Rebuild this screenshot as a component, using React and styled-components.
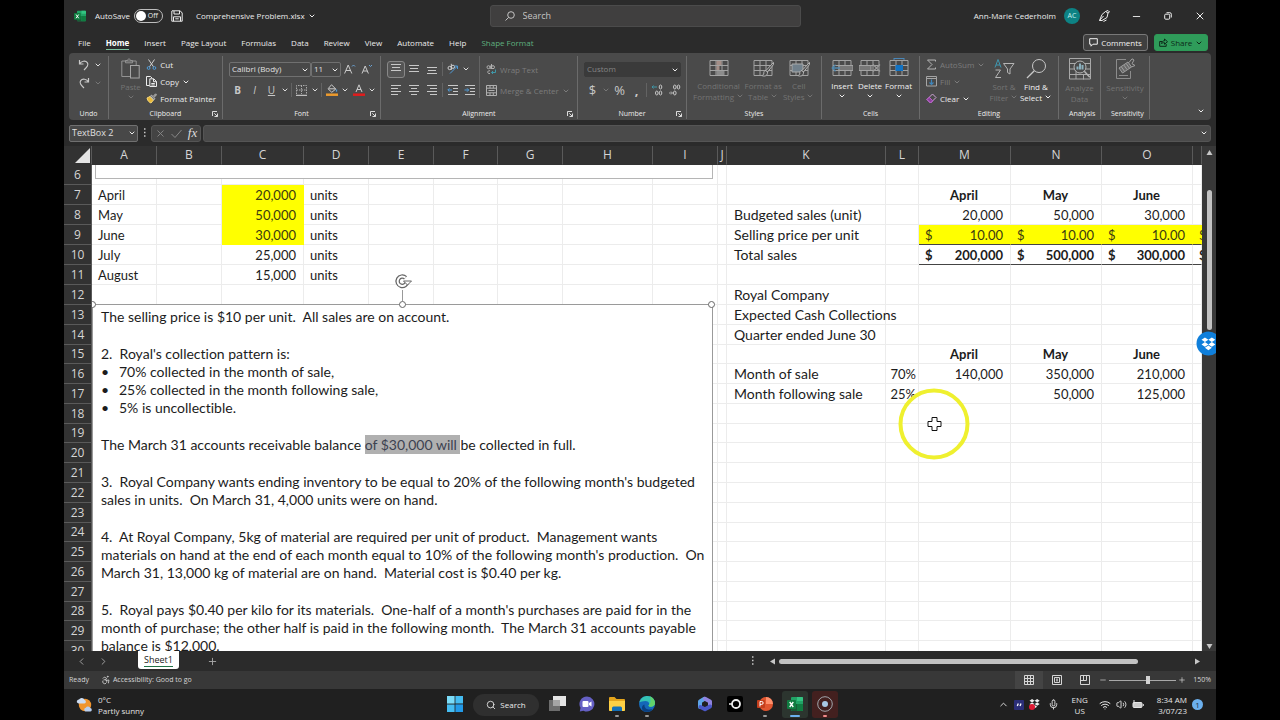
import React from "react";
import styled, { createGlobalStyle, css } from "styled-components";
import {
  Accessibility,
  ChevronDown,
  ChevronLeft,
  ChevronRight,
  ChevronUp,
  Mic,
  Minus,
  Plus,
  Search,
  Volume2,
  Wifi,
  X,
} from "lucide-react";

const GlobalStyle = createGlobalStyle`
  * {
    box-sizing: border-box;
  }

  body {
    margin: 0;
    background: #000;
  }

  button, input, select {
    margin: 0;
    padding: 0;
    border: 0;
    background: none;
    color: inherit;
    font: inherit;
    outline: none;
  }

  svg {
    display: block;
    flex: none;
  }
`;

const Screen = styled.div`
  min-height: 100vh;
  padding: 0 5%;
  background: #000;
`;

const Desktop = styled.div`
  position: relative;
  display: flex;
  flex-direction: column;
  height: 100vh;
  overflow: hidden;
  background: #2b2b2b;
  color: #ececec;
  font-family: "Open Sans", "Noto Sans", sans-serif;
  font-size: 8px;
  line-height: 12px;
  white-space: nowrap;
`;

/* Title bar */

const TitleBar = styled.header`
  display: grid;
  grid-template-columns: 1fr 311px 1fr;
  gap: 0 20px;
  align-items: center;
  height: 32px;
  flex: none;
  padding: 0 0 0 10px;
`;

const TitleSide = styled.div`
  display: flex;
  align-items: center;
  justify-content: ${props => props.end ? "flex-end" : "flex-start"};
`;

const FileName = styled.button`
  display: flex;
  align-items: center;
  gap: 3px;
  margin-left: 13px;
`;

const AutoSave = styled.label`
  display: flex;
  align-items: center;
  gap: 4px;
  margin: 0 8px 0 9px;
`;

const Toggle = styled.span`
  position: relative;
  display: flex;
  align-items: center;
  justify-content: flex-end;
  width: 29px;
  height: 14px;
  padding-right: 4px;
  border: 1px solid #bdbdbd;
  border-radius: 7px;
  font-size: 7px;

  input {
    position: absolute;
    left: 1px;
    top: 1px;
    width: 10px;
    height: 10px;
    appearance: none;
    border-radius: 50%;
    background: #fff;
  }
`;

const SearchBox = styled.label`
  display: flex;
  align-items: center;
  gap: 8px;
  height: 22px;
  padding: 0 14px;
  border: 1px solid #4b4b4b;
  border-radius: 3px;
  background: #403f3f;
  color: #c4c4c4;

  input {
    flex: 1;
    min-width: 0;
    font-size: 9px;
  }

  input::placeholder {
    color: #c4c4c4;
  }
`;

const Avatar = styled.span`
  display: flex;
  align-items: center;
  justify-content: center;
  width: 16px;
  height: 16px;
  margin: 0 8px;
  border-radius: 50%;
  background: #0d8284;
  color: #c9f1ee;
  font-size: 7px;
`;

const WindowButton = styled.button`
  display: flex;
  align-items: center;
  justify-content: center;
  width: 32px;
  height: 24px;
  color: #eee;
`;

/* Tabs */

const TabBar = styled.nav`
  display: flex;
  align-items: center;
  gap: 15px;
  height: 21px;
  flex: none;
  padding: 0 8px 0 14px;
`;

const Tab = styled.a`
  height: 13px;
  margin-top: 2px;
  color: ${props => props.accent ? "#5fb07f" : "#ececec"};
  text-decoration: none;

  ${props => props.active && css`
    color: #fff;
    font-weight: 700;
    border-bottom: 1px solid #7cc5a0;
  `}
`;

const TabActions = styled.div`
  display: flex;
  gap: 6px;
  margin-left: auto;
`;

const ActionButton = styled.button`
  display: flex;
  align-items: center;
  justify-content: center;
  gap: 3px;
  width: ${props => props.green ? 54 : 65}px;
  height: 17px;
  border: 1px solid ${props => props.green ? "#2e9a58" : "#787878"};
  border-radius: 3px;
  background: ${props => props.green ? "#2f9c5a" : "#3f3f3f"};
  color: ${props => props.green ? "#0c2a18" : "#f2f2f2"};
`;

/* Ribbon */

const Ribbon = styled.section`
  display: flex;
  height: 67px;
  flex: none;
  margin: 0 5px;
  padding: 3px 0 1px;
  border-radius: 4px;
  background: #4a4a4a;
`;

const GroupBox = styled.div`
  display: flex;
  flex-direction: column;
  justify-content: space-between;
  flex: none;
  width: ${props => props.width}px;
  border-right: 1px solid #6b6b6b;
`;

const GroupBody = styled.div`
  display: flex;
  justify-content: ${props => props.center ? "center" : "flex-start"};
  height: 52px;
  padding: 0 6px;
`;

const GroupFooter = styled.div`
  display: grid;
  grid-template-columns: 10px 1fr 10px;
  align-items: center;
  height: 11px;
  text-align: center;
  font-size: 7px;
  line-height: 11px;
`;

const ToolColumn = styled.div`
  display: flex;
  flex-direction: column;
  gap: ${props => props.gap || 0}px;
  flex: ${props => props.grow ? 1 : "none"};
  padding-top: ${props => props.top || 0}px;
  padding-left: ${props => props.indent || 0}px;
`;

const ToolRow = styled.div`
  display: flex;
  align-items: center;
  height: 18px;
`;

const Tool = styled.button`
  display: flex;
  align-items: center;
  justify-content: center;
  width: ${props => props.wide ? 18 : 17}px;
  height: 17px;
  border-radius: 3px;
  color: #c8c8c8;
  font-size: ${props => props.large ? 13 : 10}px;
  font-weight: ${props => props.bold ? 700 : 400};

  ${props => props.pressed && css`
    border: 1px solid #888;
    background: #555;
  `}
`;

const Arrow = styled.button`
  display: flex;
  align-items: center;
  justify-content: center;
  width: 10px;
  height: 16px;
  color: ${props => props.dim ? "#777" : "#ddd"};
`;

const Divider = styled.span`
  width: 1px;
  height: ${props => props.tall ? 42 : 14}px;
  margin: 0 1px;
  background: #636363;
`;

const LineTool = styled.button`
  display: flex;
  align-items: center;
  gap: 3px;
  height: 17px;
  color: ${props => props.dim ? "#7c7c7c" : "#ececec"};
`;

const BigTool = styled.button`
  display: flex;
  flex-direction: column;
  align-items: center;
  width: ${props => props.width}px;
  padding-top: 2px;
  color: ${props => props.dim ? "#747474" : "#f0f0f0"};
  line-height: 11px;

  span {
    display: flex;
    align-items: center;
    gap: 2px;
    min-height: 11px;
  }

  svg:first-child {
    margin-bottom: 2px;
  }
`;

const SelectBox = styled.span`
  position: relative;
  display: flex;
  width: ${props => props.width}px;
  height: ${props => props.tall ? 17 : 15}px;

  select {
    width: 100%;
    padding: 0 2px;
    appearance: none;
    border: 1px solid ${props => props.dim ? "#3a3a3a" : "#707070"};
    border-radius: 2px;
    background: ${props => props.dim ? "#3a3a3a" : "#484848"};
    color: ${props => props.dim ? "#858585" : "#e0e0e0"};
    font-size: ${props => props.tall ? 9 : 8}px;
  }

  svg {
    position: absolute;
    right: 2px;
    top: 4px;
    pointer-events: none;
  }
`;

const CollapseButton = styled.button`
  align-self: flex-end;
  margin-left: auto;
  padding: 4px 6px;
`;

/* Formula bar */

const FormulaBar = styled.div`
  display: flex;
  align-items: center;
  height: 26px;
  flex: none;
  padding: 0 5px;
`;

const FormulaButtons = styled.div`
  display: flex;
  align-items: center;
  justify-content: space-around;
  width: 50px;
  height: 17px;
  margin-right: 2px;
  border: 1px solid #555;
  border-radius: 3px;
  background: #444;
  color: #888;
`;

const FormulaInput = styled.label`
  display: flex;
  align-items: center;
  flex: 1;
  height: 17px;
  padding: 0 2px;
  border: 1px solid #555;
  border-radius: 3px;
  background: #4a4a4a;

  input {
    flex: 1;
  }
`;

const FunctionButton = styled.button`
  color: #ddd;
  font-family: "Liberation Serif", serif;
  font-size: 13px;
  font-style: italic;
`;

/* Sheet */

const SheetArea = styled.main`
  display: flex;
  flex: 1;
  min-height: 0;
`;

const Grid = styled.div`
  position: relative;
  flex: 1;
  min-width: 0;
  overflow: hidden;
  background: #fff;
`;

const SheetTable = styled.table`
  width: 100%;
  table-layout: fixed;
  border-collapse: separate;
  border-spacing: 0;
  color: #1c1c1c;
  font-family: Lato, sans-serif;
  font-size: 13px;
  font-variant-ligatures: none;
  line-height: 18px;
`;

const HeadCell = styled.th`
  height: ${props => props.short ? 19 : 20}px;
  padding: 0;
  overflow: hidden;
  border-right: 1px solid #5a5a5a;
  border-bottom: 1px solid ${props => props.column ? "#323232" : "#5a5a5a"};
  background: #323232;
  color: #d6d6d6;
  font-family: "Open Sans", "Noto Sans", sans-serif;
  font-size: 12px;
  font-weight: 400;
  line-height: 18px;
  text-align: center;
`;

const Cell = styled.td`
  padding: 0 ${props => props.tight ? 2 : 7}px 0 ${props => props.tight ? 0 : 6}px;
  border-right: 1px solid #ececec;
  border-bottom: 1px solid #ececec;
  text-align: ${props => props.align || "left"};
  font-weight: ${props => props.bold ? 700 : 400};

  ${props => props.label && css`
    padding-left: 7px;
    font-size: 14px;
  `}

  ${props => props.filled && css`
    border-color: #ff0;
    background: #ff0;
    color: #3a3a10;
  `}

  ${props => props.ruled && css`
    border-bottom-color: #444;
  `}
`;

const Money = styled.div`
  display: flex;
  justify-content: space-between;
`;

const Layer = styled.div`
  position: absolute;
  inset: 19px 0 0 28px;
  overflow: hidden;
  pointer-events: none;
`;

const UpperBox = styled.div`
  position: absolute;
  left: 3px;
  top: 0;
  width: 618px;
  height: 14px;
  border: 1px solid #b5b5b5;
  border-top: 0;
  background: #fff;
`;

const TextBox = styled.div`
  position: absolute;
  left: 0;
  top: 139px;
  width: 621px;
  padding: 3px 8px;
  border: 1px solid #9a9a9a;
  background: #fff;
  color: #1c1c1c;
  font-family: Lato, sans-serif;
  font-size: 14px;
  font-variant-ligatures: none;
  line-height: 18px;
  pointer-events: auto;

  p, ul {
    margin: 0 0 19px;
    padding: 0;
    white-space: pre;
  }

  p.lead {
    margin: 0;
  }

  li {
    display: flex;
    list-style: none;
  }

  li::before {
    content: "•";
    width: 18px;
  }

  mark {
    padding: 1px 0;
    background: #b0b0b0;
    color: #3c4250;
  }
`;

const Handle = styled.span`
  position: absolute;
  left: ${props => props.at};
  top: -4px;
  width: 7px;
  height: 7px;
  margin-left: -4px;
  border: 1px solid #666;
  border-radius: 50%;
  background: #fff;
`;

const Rotate = styled.span`
  position: absolute;
  left: 50%;
  top: -32px;
  margin-left: -9px;
`;

const Pointer = styled.span`
  position: absolute;
  left: 806px;
  top: 223px;
`;

const DropboxBadge = styled.span`
  position: absolute;
  right: -5px;
  top: 331px;
`;

const VerticalBar = styled.div`
  display: flex;
  flex-direction: column;
  align-items: center;
  width: 14px;
  flex: none;
  padding: 3px 0 1px;
  background: #383838;
`;

const Thumb = styled.span`
  border-radius: 3px;
  background: #c2c2c2;

  ${props => props.vertical ? css`
    width: 5px;
    height: 28%;
    margin: 34px 0 auto;
  ` : css`
    width: 83%;
    height: 5px;
    margin-right: auto;
  `}
`;

/* Sheet tabs and status bar */

const SheetTabs = styled.div`
  display: flex;
  align-items: center;
  height: 20px;
  flex: none;
  padding: 0 15px 0 12px;
  color: #a8a8a8;
`;

const SheetNav = styled.div`
  display: flex;
  gap: 11px;
`;

const SheetTab = styled.a`
  align-self: flex-start;
  height: 18px;
  margin: 0 28px 0 29px;
  padding: 3px 6px 0;
  border-radius: 0 0 3px 3px;
  background: #fff;
  color: #222;
  font-size: 9px;
  text-decoration: none;

  span {
    display: block;
    border-bottom: 1px solid #1f7246;
  }
`;

const HorizontalBar = styled.div`
  display: flex;
  align-items: center;
  gap: 3px;
  flex: 0 1 432px;
  margin-left: 10px;
`;

const Spacer = styled.span`
  flex: 1;
`;

const StatusBar = styled.footer`
  display: flex;
  align-items: center;
  height: 18px;
  flex: none;
  padding: 0 5px;
  background: #383838;
  color: #d6d6d6;
  font-size: 7px;
`;

const StatusText = styled.span`
  display: flex;
  align-items: center;
  gap: 2px;
  margin-right: 12px;
`;

const ZoomLevel = styled.span`
  margin-left: 7px;
`;

const ViewButton = styled.button`
  display: flex;
  align-items: center;
  justify-content: center;
  width: 28px;
  height: 18px;
  background: ${props => props.active ? "#444" : "none"};
`;

const ZoomSlider = styled.input`
  width: 67px;
  height: 12px;
  margin: 0 2px;
  appearance: none;
  background: linear-gradient(#a8a8a8, #a8a8a8) center / 100% 1px no-repeat;

  &::-webkit-slider-thumb {
    appearance: none;
    width: 4px;
    height: 8px;
    background: #d2d2d2;
  }
`;

/* Taskbar */

const Taskbar = styled.div`
  display: grid;
  grid-template-columns: 1fr auto 1fr;
  align-items: center;
  height: 31px;
  flex: none;
  background: #202020;
`;

const Weather = styled.div`
  display: flex;
  align-items: center;
  gap: 5px;
  padding-left: 12px;
  line-height: 11px;
  color: #e0e0e0;
`;

const Apps = styled.div`
  display: flex;
  align-items: center;
`;

const AppButton = styled.button`
  display: flex;
  flex-direction: column;
  align-items: center;
  justify-content: flex-end;
  width: 26px;
  height: 27px;
  margin: 0 2px;
  padding-bottom: 1px;
  border-radius: 3px;
  background: ${props => props.tint || "none"};

  &::after {
    content: "";
    width: ${props => props.active ? 10 : 4}px;
    height: 2px;
    margin-top: 3px;
    border-radius: 1px;
    background: ${props => props.mark || "transparent"};
  }
`;

const SearchPill = styled.button`
  display: flex;
  align-items: center;
  justify-content: center;
  gap: 4px;
  width: 66px;
  height: 22px;
  margin: 0 3px;
  border-radius: 11px;
  background: #2f2f2f;
`;

const AppGap = styled.span`
  width: 28px;
`;

const Tray = styled.div`
  display: flex;
  align-items: center;
  justify-content: flex-end;
  gap: 5px;
  padding-right: 13px;
  line-height: 11px;
  color: #e6e6e6;
`;

const Language = styled.div`
  margin: 0 6px 0 5px;
  text-align: center;
`;

const Microphone = styled.span`
  margin: 0 3px;
`;

const Clock = styled.div`
  margin-left: 8px;
  text-align: right;
`;

const Count = styled.span`
  width: 11px;
  height: 11px;
  border-radius: 50%;
  background: #6cb0ee;
  color: #17304a;
  line-height: 11px;
  text-align: center;
`;

/* Icons */

const Svg = ({ size = 16, w, h, box, children }) => (
  <svg
    width={ w || size }
    height={ h || size }
    viewBox={ box || `0 0 ${w || size} ${h || size}` }
    fill="none"
    stroke="currentColor"
  >
    {children}
  </svg>
);

const Chevron = () => <ChevronDown size={ 8 } strokeWidth={ 3 } />;

const DotsIcon = () => (
  <Svg w={ 13 } h={ 12 }>
    <path d="M6 2h1.500M6 5.500h1.500M6 9h1.500" strokeWidth="1.500" stroke="#c8c8c8" />
  </Svg>
);

const ExcelIcon = ({ size }) => (
  <Svg size={ size } box="0 0 16 16">
    <g stroke="none">
      <rect x="4" y="1" width="12" height="14" rx="1" fill="#21a366" />
      <path d="M10 1h5a1 1 0 0 1 1 1v3h-6z" fill="#33c481" />
      <path d="M4 8h6v7H5a1 1 0 0 1-1-1z" fill="#185c37" />
      <path d="M10 8h6v6a1 1 0 0 1-1 1h-5z" fill="#107c41" />
      <rect y="4" width="9" height="9" rx="1" fill="#107c41" />
    </g>
    <path d="M2.7 6l3.6 5M6.3 6l-3.6 5" stroke="#fff" strokeWidth="1.3" />
  </Svg>
);

const SaveIcon = () => (
  <Svg size={ 12 }>
    <path d="M1 .8h8.2L11.2 3v8.2H.8V1zM3 1v3h5.5V1M2.5 11.2V6.8h7v4.4M4.3 8.8h3.4" />
  </Svg>
);

const PenIcon = () => (
  <Svg size={ 12 }>
    <path d="M1.500 10.500L4 4.500l3.500-3 2.500 1.500-1 4.500-5 3zM1.500 10.500l4-4.500M7.500 1.500L10 .500 11.500 2 10 3M5.500 11.500l3-1.500" />
  </Svg>
);

const RestoreIcon = () => (
  <Svg size={ 8 }>
    <rect x=".7" y="2.2" width="5" height="5" rx="1" />
    <path d="M2.5.7h3.3a1.5 1.5 0 0 1 1.5 1.5v3.3" />
  </Svg>
);

const UndoIcon = ({ redo }) => (
  <Svg size={ 12 }>
    <path
      d={ redo ? "M10.500 1v4H6.500M10.300 4.800C8.800 2 4.500 1.200 2.700 3.600 1 6 3 8 6 11" : "M1.500 1v4h4M1.700 4.800C3.200 2 7.500 1.200 9.300 3.600 11 6 9 8 6 11" }
      strokeWidth="1.2"
    />
  </Svg>
);

const PasteIcon = () => (
  <Svg w={ 19 } h={ 21 }>
    <path d="M9 18.500H.8V3h14.400v4M4.500 4.800V2.500h2C6.500.500 9.500.500 9.500 2.500h2v2.300z" stroke="#939393" />
    <rect x="9.500" y="7.500" width="8.700" height="12.500" stroke="#a5a5a5" fill="#4a4a4a" />
  </Svg>
);

const CutIcon = () => (
  <Svg size={ 11 }>
    <path d="M2.500.500l5 7.300M8.500.500l-5 7.300" stroke="#d0d0d0" />
    <circle cx="2.600" cy="9" r="1.400" stroke="#4f9bd8" />
    <circle cx="8.400" cy="9" r="1.400" stroke="#4f9bd8" />
  </Svg>
);

const CopyIcon = () => (
  <Svg size={ 11 }>
    <path d="M3.500 9.500h-3v-9h4l1.500 1.500" />
    <path d="M3.800 2.800h4l2.700 2.700v5h-6.700zM7.500 3v2.700h3M5.300 7.500h3.500M5.300 9h3.500" />
  </Svg>
);

const PainterIcon = () => (
  <Svg size={ 11 }>
    <path d="M1 5l3-1.500 3.500 3.500L5 10C3.500 9.500 1.500 8 1 5z" fill="#e8b838" stroke="#f4d678" />
    <path d="M4.300 3.300l1.200-1.200L7 3.500 9.600.800l.900 1L8 4.500l1 1.200-1.300 1.200z" fill="#777" stroke="#ddd" strokeWidth=".7" />
  </Svg>
);

const LauncherIcon = () => (
  <Svg size={ 6 }>
    <path d="M.5 5V.5H5M2.300 2.300l3 3M5.500 2.500v3h-3" strokeWidth=".9" />
  </Svg>
);

const LinesIcon = ({ lines }) => (
  <Svg size={ 12 }>
    {lines.map(([x, y, width]) => (
      <path key={ y } d={ `M${x} ${y}h${width}` } />
    ))}
  </Svg>
);

const BorderIcon = () => (
  <Svg size={ 11 }>
    <path d="M.5 9V.5h10V9M5.500.500V9M.500 5h10" strokeDasharray="1.500 1" stroke="#aaa" />
    <path d="M0 10.300h11" stroke="#ddd" />
  </Svg>
);

const BucketIcon = () => (
  <Svg size={ 12 }>
    <path d="M5.500.800L9.800 5 5.800 8.300 2 4.800zM3 4.800h6.500" stroke="#ccc" />
    <path d="M10.500 5.500v2.200" stroke="#4f9bd8" strokeWidth="1.300" />
    <path d="M0 10.700h12" stroke="#ec9a2d" strokeWidth="2.500" />
  </Svg>
);

const FontColorIcon = () => (
  <Svg size={ 12 }>
    <path d="M3 8L6 .800 9 8M4 5.500h4" stroke="#ccc" />
    <path d="M0 10.700h12" stroke="#e01c1c" strokeWidth="2.500" />
  </Svg>
);

const FontSizeIcon = ({ down }) => (
  <Svg size={ 12 }>
    <path d={ down ? "M1 10.500L4.200 3l3.200 7.500M2.200 8h4" : "M.600 10.500L4.200 2l3.600 8.500M2 7.500h4.500" } stroke="#ccc" />
    <path d={ down ? "M8 2l1.500 1.500L11 2" : "M8 3.500L9.500 2 11 3.500" } stroke="#6ba5d8" />
  </Svg>
);

const OrientationIcon = () => (
  <Svg size={ 12 }>
    <circle cx="2.700" cy="5" r="1.700" stroke="#ccc" />
    <circle cx="6" cy="3.800" r="1.600" stroke="#ccc" />
    <path d="M4.500 3.500v3.200M4.300.800v4.500" stroke="#ccc" />
    <path d="M3 10.500L10.500 3M7.500 3h3v3" stroke="#4f9bd8" />
  </Svg>
);

const IndentIcon = ({ right }) => (
  <Svg size={ 12 }>
    <path d="M1 1.500h10M6 4.500h5M6 7.500h5M1 10.500h10" />
    <path d={ right ? "M.500 6h4M3 4.300L4.700 6 3 7.700" : "M5 6H1M2.500 4.300L.800 6l1.700 1.700" } stroke="#4f9bd8" />
  </Svg>
);

const WrapIcon = () => (
  <Svg size={ 11 }>
    <g stroke="#b0b0b0">
      <circle cx="2.500" cy="3.200" r="1.500" />
      <circle cx="7" cy="3.200" r="1.500" />
      <path d="M4.300 1.500v3.500M5.500 0v5M4 6.800C1 6 1 10.300 4 9.500" />
    </g>
    <path d="M9.500 5.500v3H5.500M7 7L5.500 8.500 7 10" stroke="#3f97a8" />
  </Svg>
);

const MergeIcon = () => (
  <Svg size={ 11 }>
    <path
      d="M.500.500h10v10H.500zM.500 3.200h10M.500 7.800h10M4 .500v2.700M7.300.500v2.700M4 7.800v2.700M7.300 7.800v2.700M2.500 5.500h6"
      stroke="#b0b0b0"
    />
  </Svg>
);

const DecimalIcon = ({ less }) => (
  <Svg size={ 12 }>
    <ellipse cx="9.500" cy="3" rx="1.300" ry="2" />
    <ellipse cx="5.800" cy="9" rx="1.300" ry="2" />
    {less ? <ellipse cx="5.800" cy="3" rx="1.300" ry="2" /> : <ellipse cx="9.500" cy="9" rx="1.300" ry="2" />}
    <path d={ less ? "M0 9h3.500M2 7.500L3.500 9 2 10.500" : "M6 3H1M2.500 1.500L1 3l1.500 1.500" } stroke={ less ? "#aaa" : "#3f97a8" } />
  </Svg>
);

const CellsIcon = ({ kind }) => (
  <Svg w={ 22 } h={ 20 }>
    <path d="M2 2.500h18v15H2zM2 7.500h18M2 12.500h18M8 2.500v15M14 2.500v15" stroke="#a2a2a2" />
    {kind === "conditional" && (
      <g stroke="none">
        <path d="M8.500 3h5v4h-5zM8.500 8h3v4h-3z" fill="#a58f88" />
        <path d="M8.500 13h8v4h-8z" fill="#8c8c8c" />
      </g>
    )}
    {kind === "insert" && (
      <>
        <path d="M8 7.500h14v5H8z" fill="#777" stroke="#a2a2a2" />
        <path d="M9 10H1M4.500 6.800L1.200 10l3.300 3.200" stroke="#5288ad" strokeWidth="1.300" />
      </>
    )}
    {kind === "delete" && (
      <>
        <path d="M0 7.500h12v5H0z" fill="#777" stroke="#a2a2a2" />
        <path d="M14 6.500l7 7M21 6.500l-7 7" stroke="#999" strokeWidth="1.300" />
      </>
    )}
    {kind === "format" && (
      <>
        <path d="M7.500 7h7.500v6H7.500z" fill="#1273c4" stroke="none" />
        <path d="M6 0v2M16 0v2M6 .500h10" stroke="#4a87b8" />
      </>
    )}
    {(kind === "table" || kind === "styles") && (
      <>
        {kind === "styles" && <path d="M4 6h11v8H4z" fill="#71808b" stroke="#aaa" />}
        <path d="M21.500 4.500l-7.500 8 1.500 1.500 6-7.500zM14 12.500c-2 0-2.500 2-2.200 3.500-.500 1-1.300 1.300-2 1.500 2.500 1.300 6 .500 5.700-3.500z" fill="#4a4a4a" stroke="#b4b4b4" />
      </>
    )}
  </Svg>
);

const SumIcon = () => (
  <Svg size={ 11 }>
    <path d="M9.500 2.500V1h-8L6 5.500 1.500 10h8V8.500" stroke="#b5b5b5" />
  </Svg>
);

const FillIcon = () => (
  <Svg size={ 11 }>
    <path d="M.5.500h10v9.500H.500z" stroke="#a5a5a5" />
    <path d="M.5 2.500h10" stroke="#a5a5a5" />
    <path d="M5.500 3.500v5M3.500 6.500l2 2 2-2" stroke="#3f86bb" strokeWidth="1.200" />
  </Svg>
);

const EraserIcon = () => (
  <Svg size={ 11 }>
    <path d="M6.500 1L10 4.500 4.500 10 1 6.500z" stroke="#cfa4d8" />
    <path d="M3.200 4.300l3.500 3.500L4.500 10 1 6.500z" fill="#8b3f9c" stroke="#c25fd4" />
  </Svg>
);

const SortIcon = () => (
  <Svg w={ 21 } h={ 21 }>
    <path d="M1 9.500L4 1.500l3 8M2 7h4" stroke="#3f97b0" />
    <path d="M1.500 12h5l-5 7.500h5.500" stroke="#b5b5b5" />
    <path d="M9.500 5.500h10.500l-4 5.500v5l-2.500-1.500V11z" stroke="#b5b5b5" />
  </Svg>
);

const FindIcon = () => (
  <Svg w={ 21 } h={ 21 }>
    <circle cx="13" cy="8" r="6.500" stroke="#c8c8c8" />
    <path d="M8.300 12.700L1 20" stroke="#c8c8c8" strokeWidth="1.300" />
  </Svg>
);

const AnalyzeIcon = () => (
  <Svg w={ 22 } h={ 22 }>
    <path d="M.500.500h21v20.500H.500zM.500 5.500h21M.500 11h21M.500 16.500h21M7 11v10M14.500 16.500v5" stroke="#a8a8a8" />
    <circle cx="11" cy="9" r="6" fill="#4a4a4a" stroke="#b5b5b5" />
    <path d="M15.300 13.300l5.500 6" stroke="#b5b5b5" strokeWidth="1.500" />
    <path d="M8.500 11.500v-3M11 11.500V5.500M13.500 11.500V7" stroke="#8bb0bd" strokeWidth="2" />
  </Svg>
);

const SensitivityIcon = () => (
  <Svg w={ 21 } h={ 22 }>
    <path d="M11 1.500H1.500v19h14V13M4 17.500h9" stroke="#8c8c8c" />
    <path d="M4 10l3.500 5 9-6-3.500-5z" fill="#6a6a6a" stroke="#a0a0a0" />
    <path d="M14 4.500L17 .800l2 1.200-2 3.700 3 1.800-3.500 1.500M6.500 9l3 4.300M9 7.200l3 4.300M11.300 5.700l3 4.300" stroke="#a0a0a0" />
  </Svg>
);

const Triangle = ({ d }) => (
  <Svg size={ 7 }>
    <path d={ d } fill="#c8c8c8" stroke="none" />
  </Svg>
);

const DropboxShape = ({ x, y, scale, fill }) => (
  <path
    d="M3 0l3 2-3 2-3-2zM9 0l3 2-3 2-3-2zM3 4l3 2-3 2-3-2zM9 4l3 2-3 2-3-2zM6 7l3 2-3 2-3-2z"
    transform={ `translate(${x} ${y}) scale(${scale})` }
    fill={ fill }
    stroke="none"
  />
);

const WeatherIcon = () => (
  <Svg w={ 17 } h={ 16 }>
    <g stroke="none">
      <circle cx="9" cy="8" r="6.200" fill="#f0952e" />
      <path d="M1 5.500a2.200 2.200 0 0 1 2-3 3 3 0 0 1 5.500.500 1.800 1.800 0 0 1 0 3.500H2.500z" fill="#ccdcf2" />
      <path d="M9.500 14.500a2 2 0 0 1 .300-3.800 2.500 2.500 0 0 1 4.500.300 1.800 1.800 0 0 1 .200 3.500z" fill="#b9cff0" />
    </g>
  </Svg>
);

const StartIcon = () => (
  <Svg size={ 16 }>
    <g stroke="none">
      <path d="M0 0h7.600v7.600H0z" fill="#7bdcf8" />
      <path d="M8.400 0H16v7.600H8.400zM0 8.400h7.600V16H0z" fill="#45bdf2" />
      <path d="M8.400 8.400H16V16H8.400z" fill="#229ae8" />
    </g>
  </Svg>
);

const TaskViewIcon = () => (
  <Svg size={ 17 }>
    <g stroke="none">
      <path d="M0 5h11v11H0z" fill="#6d6d6d" />
      <path d="M4 1h13v10H4z" fill="#e4e4e4" />
      <path d="M4 5h7v6H4z" fill="#a5a5a5" />
    </g>
  </Svg>
);

const ChatIcon = () => (
  <Svg size={ 16 }>
    <g stroke="none">
      <path d="M8 .500a7.500 7.500 0 1 1-3.500 14.200L.800 15.500l.700-3.700A7.500 7.500 0 0 1 8 .500z" fill="#6560c4" />
      <rect x="3.500" y="5" width="6" height="6" rx="1" fill="#fff" />
      <path d="M10 7l2.500-1.500v5L10 9z" fill="#fff" />
    </g>
  </Svg>
);

const FolderIcon = () => (
  <Svg size={ 16 }>
    <g stroke="none">
      <path d="M0 2a1 1 0 0 1 1-1h4.500l2 2H15a1 1 0 0 1 1 1v10.500H0z" fill="#e5a51c" />
      <path d="M0 5h16v9a1 1 0 0 1-1 1H1a1 1 0 0 1-1-1z" fill="#fdd045" />
      <path d="M3 15v-3a1.500 1.500 0 0 1 1.500-1.500h7A1.500 1.500 0 0 1 13 12v3z" fill="#1470b8" />
    </g>
  </Svg>
);

const EdgeIcon = () => (
  <Svg size={ 16 }>
    <g stroke="none">
      <circle cx="8" cy="8" r="8" fill="#1467b8" />
      <path d="M.300 6.500C1.500 2 5 0 8.500 0 13 0 16 3.500 16 7c0 2.500-2 3.800-4 3.800-1.500 0-2.500-.500-2.500-1.300 1.500-1.500.500-4.500-3-4.500-2.700 0-5 1-6.200 1.500z" fill="#35c3b4" />
      <path d="M11 .600c3 1.100 5 3.900 5 6.400 0 2.500-2 3.800-4 3.800-1.500 0-2.500-.500-2.500-1.300C12 7.500 12 4 11 .600z" fill="#62d26a" />
      <path d="M5.500 8.500c-.500 4 3.500 6 8 4.500-2 3-6 3.500-8.500 2.200C2 13.500 2.500 9.500 5.500 8.500z" fill="#0b3f80" />
    </g>
  </Svg>
);

const CopilotIcon = () => (
  <Svg size={ 16 }>
    <g strokeWidth="4" strokeLinejoin="round" strokeLinecap="round">
      <path d="M3 11V5.500L7.500 2.800" stroke="#5da4e8" />
      <path d="M8 2.800L13 5.500V9" stroke="#9083e0" />
      <path d="M13 10.500L8 13.200 3.500 11" stroke="#4a58c8" />
    </g>
  </Svg>
);

const RingIcon = () => (
  <Svg size={ 16 }>
    <rect width="16" height="16" rx="2" fill="#000" stroke="none" />
    <circle cx="9" cy="8" r="4" stroke="#eee" strokeWidth="1.800" />
    <path d="M2 8h3" stroke="#eee" strokeWidth="1.500" />
  </Svg>
);

const PowerPointIcon = () => (
  <Svg size={ 16 }>
    <g stroke="none">
      <circle cx="9" cy="8" r="7" fill="#e0552f" />
      <path d="M9 1a7 7 0 0 1 7 7H9z" fill="#ff8f6b" />
      <rect y="4" width="8" height="8" rx="1" fill="#c43e1c" />
    </g>
    <path d="M3 10.500v-5h1.700a1.400 1.400 0 0 1 0 2.900H3" stroke="#fff" />
  </Svg>
);

const RecordIcon = () => (
  <Svg size={ 16 }>
    <circle cx="8" cy="8" r="7.300" stroke="#a0a6ac" />
    <circle cx="8" cy="8" r="3" fill="#a9c8e4" stroke="none" />
  </Svg>
);

const QuoteIcon = () => (
  <Svg size={ 10 }>
    <rect width="10" height="10" rx="1" fill="#2b2e78" stroke="none" />
    <path d="M4.300 3.500L3.300 6M7 3.500L6 6" stroke="#fff" strokeWidth="1.300" />
  </Svg>
);

const TrayDropboxIcon = () => (
  <Svg size={ 11 }>
    <DropboxShape x={ 0.5 } y={ 0 } scale={ 0.85 } fill="#eee" />
    <circle cx="3" cy="8" r="3" fill="#e01b34" stroke="none" />
  </Svg>
);

const BatteryIcon = () => (
  <Svg w={ 12 } h={ 9 }>
    <rect x="1" y="2.500" width="9" height="5" rx="1" fill="#ccc" />
    <path d="M11.300 4v2M2 0v4" />
  </Svg>
);

const NormalViewIcon = () => (
  <Svg size={ 10 }>
    <path d="M.500.500h9v9h-9zM.500 3.500h9M.500 6.500h9M3.500.500v9M6.500.500v9" />
  </Svg>
);

const PageViewIcon = () => (
  <Svg size={ 10 }>
    <path d="M.500.500h9v9h-9zM2.500 2.500h5v5h-5zM4 4.200h2M4 5.800h2" />
  </Svg>
);

const BreakViewIcon = () => (
  <Svg size={ 10 }>
    <path d="M.500.500h9v9h-9zM3.500.500v5M6.500.500v5M.500 5.500h6" />
  </Svg>
);

/* Data */

const tabs = [
  "File", "Home", "Insert", "Page Layout", "Formulas", "Data",
  "Review", "View", "Automate", "Help", "Shape Format",
];

const columns = [
  ["A", 65], ["B", 65], ["C", 82], ["D", 65], ["E", 65], ["F", 64],
  ["G", 65], ["H", 90], ["I", 65], ["J", 9], ["K", 159], ["L", 33],
  ["M", 92], ["N", 91], ["O", 91], ["P", null],
];

const shortRows = [15, 19, 24, 28];

const units = (month, amount, filled) => ({
  A: { text: month },
  C: { text: amount, align: "right", filled },
  D: { text: "units" },
});

const months = {
  M: { text: "April", align: "center", bold: true },
  N: { text: "May", align: "center", bold: true },
  O: { text: "June", align: "center", bold: true },
};

const amounts = (...values) => {
  const cells = {};
  values.forEach((text, i) => {
    cells["MNO"[i]] = { text, align: "right" };
  });
  return cells;
};

const money = (values, style) => {
  const cells = { P: { money: true, text: "", ruled: true, ...style } };
  values.forEach((text, i) => {
    cells["MNO"[i]] = { money: true, text, ruled: true, ...style };
  });
  return cells;
};

const label = text => ({ K: { text, label: true } });

const sheet = {
  7: { ...units("April", "20,000", true), ...months },
  8: {
    ...units("May", "50,000", true),
    ...label("Budgeted sales (unit)"),
    ...amounts("20,000", "50,000", "30,000"),
  },
  9: {
    ...units("June", "30,000", true),
    ...label("Selling price per unit"),
    ...money(["10.00", "10.00", "10.00"], { filled: true }),
  },
  10: {
    ...units("July", "25,000"),
    ...label("Total sales"),
    ...money(["200,000", "500,000", "300,000"], { bold: true }),
  },
  11: units("August", "15,000"),
  12: label("Royal Company"),
  13: label("Expected Cash Collections"),
  14: label("Quarter ended June 30"),
  15: months,
  16: {
    ...label("Month of sale"),
    L: { text: "70%", align: "right", tight: true },
    ...amounts("140,000", "350,000", "210,000"),
  },
  17: {
    ...label("Month following sale"),
    L: { text: "25%", align: "right", tight: true },
    ...amounts("", "50,000", "125,000"),
  },
};

const rows = Array.from({ length: 25 }, (_, i) => i + 6);

/* Components */

const Group = ({ label: name, width, center, launcher, children }) => (
  <GroupBox width={ width }>
    <GroupBody center={ center }>{children}</GroupBody>
    <GroupFooter>
      <i />
      <span>{name}</span>
      {launcher ? <button aria-label={ `${name} settings` }><LauncherIcon /></button> : <i />}
    </GroupFooter>
  </GroupBox>
);

const Dropdown = ({ label: name, value, width, dim, tall }) => (
  <SelectBox width={ width } dim={ dim } tall={ tall }>
    <select aria-label={ name } defaultValue={ value }>
      <option>{value}</option>
    </select>
    <Chevron />
  </SelectBox>
);

const Large = ({ icon, first, second, arrow, width, dim }) => (
  <BigTool width={ width } dim={ dim }>
    {icon}
    <span>{first}</span>
    <span>
      {second}
      {arrow && <Chevron />}
    </span>
  </BigTool>
);

const RibbonBar = () => (
  <Ribbon>
    <Group label="Undo" width={ 40 }>
      <ToolColumn>
        <ToolRow>
          <Tool wide aria-label="Undo"><UndoIcon /></Tool>
          <Arrow aria-label="Undo list"><Chevron /></Arrow>
        </ToolRow>
        <ToolRow>
          <Tool wide aria-label="Redo"><UndoIcon redo /></Tool>
          <Arrow dim aria-label="Redo list"><Chevron /></Arrow>
        </ToolRow>
      </ToolColumn>
    </Group>
    <Group label="Clipboard" width={ 114 } launcher>
      <Large icon={ <PasteIcon /> } first="Paste" arrow dim width={ 32 } />
      <ToolColumn>
        <LineTool><CutIcon />Cut</LineTool>
        <LineTool><CopyIcon />Copy <Chevron /></LineTool>
        <LineTool><PainterIcon />Format Painter</LineTool>
      </ToolColumn>
    </Group>
    <Group label="Font" width={ 158 } launcher>
      <ToolColumn top={ 4 } gap={ 3 }>
        <ToolRow>
          <Dropdown label="Font" value="Calibri (Body)" width={ 82 } />
          <Dropdown label="Font size" value="11" width={ 30 } />
          <Tool aria-label="Increase font size"><FontSizeIcon /></Tool>
          <Tool aria-label="Decrease font size"><FontSizeIcon down /></Tool>
        </ToolRow>
        <ToolRow>
          <Tool bold>B</Tool>
          <Tool><em>I</em></Tool>
          <Tool><u>U</u></Tool>
          <Arrow aria-label="Underline styles"><Chevron /></Arrow>
          <Divider />
          <Tool aria-label="Borders"><BorderIcon /></Tool>
          <Arrow aria-label="Border styles"><Chevron /></Arrow>
          <Divider />
          <Tool aria-label="Fill color"><BucketIcon /></Tool>
          <Arrow aria-label="Fill colors"><Chevron /></Arrow>
          <Tool aria-label="Font color"><FontColorIcon /></Tool>
          <Arrow aria-label="Font colors"><Chevron /></Arrow>
        </ToolRow>
      </ToolColumn>
    </Group>
    <Group label="Alignment" width={ 197 } launcher>
      <ToolColumn top={ 4 } gap={ 3 }>
        <ToolRow>
          <Tool wide pressed aria-label="Top align"><LinesIcon lines={ [[1, 1.5, 10], [2, 4.5, 8], [1, 7.5, 10]] } /></Tool>
          <Tool wide aria-label="Middle align"><LinesIcon lines={ [[1, 2.5, 10], [2, 5.5, 8], [1, 8.5, 10]] } /></Tool>
          <Tool wide aria-label="Bottom align"><LinesIcon lines={ [[1, 4.5, 10], [2, 7.5, 8], [1, 10.5, 10]] } /></Tool>
          <Divider />
          <Tool aria-label="Orientation"><OrientationIcon /></Tool>
          <Arrow aria-label="Orientations"><Chevron /></Arrow>
        </ToolRow>
        <ToolRow>
          <Tool wide aria-label="Align left"><LinesIcon lines={ [[1, 1.5, 10], [1, 4.5, 7], [1, 7.5, 10], [1, 10.5, 7]] } /></Tool>
          <Tool wide aria-label="Center"><LinesIcon lines={ [[1, 1.5, 10], [3, 4.5, 6], [1, 7.5, 10], [3, 10.5, 6]] } /></Tool>
          <Tool wide aria-label="Align right"><LinesIcon lines={ [[1, 1.5, 10], [4, 4.5, 7], [1, 7.5, 10], [4, 10.5, 7]] } /></Tool>
          <Divider />
          <Tool aria-label="Decrease indent"><IndentIcon /></Tool>
          <Tool aria-label="Increase indent"><IndentIcon right /></Tool>
        </ToolRow>
      </ToolColumn>
      <Divider tall />
      <ToolColumn top={ 5 } gap={ 4 } indent={ 5 }>
        <LineTool dim><WrapIcon />Wrap Text</LineTool>
        <LineTool dim><MergeIcon />Merge &amp; Center <Chevron /></LineTool>
      </ToolColumn>
    </Group>
    <Group label="Number" width={ 109 } launcher>
      <ToolColumn top={ 4 } gap={ 3 }>
        <ToolRow>
          <Dropdown label="Number format" value="Custom" width={ 97 } dim />
        </ToolRow>
        <ToolRow>
          <Tool large>$</Tool>
          <Arrow dim aria-label="Currencies"><Chevron /></Arrow>
          <Tool large>%</Tool>
          <Tool large bold>,</Tool>
          <Divider />
          <Tool wide aria-label="Increase decimal"><DecimalIcon /></Tool>
          <Tool wide aria-label="Decrease decimal"><DecimalIcon less /></Tool>
        </ToolRow>
      </ToolColumn>
    </Group>
    <Group label="Styles" width={ 135 } center>
      <Large icon={ <CellsIcon kind="conditional" /> } first="Conditional" second="Formatting" arrow dim width={ 52 } />
      <Large icon={ <CellsIcon kind="table" /> } first="Format as" second="Table" arrow dim width={ 40 } />
      <Large icon={ <CellsIcon kind="styles" /> } first="Cell" second="Styles" arrow dim width={ 34 } />
    </Group>
    <Group label="Cells" width={ 98 } center>
      <Large icon={ <CellsIcon kind="insert" /> } first="Insert" arrow width={ 29 } />
      <Large icon={ <CellsIcon kind="delete" /> } first="Delete" arrow width={ 29 } />
      <Large icon={ <CellsIcon kind="format" /> } first="Format" arrow width={ 30 } />
    </Group>
    <Group label="Editing" width={ 139 } center>
      <ToolColumn grow>
        <LineTool dim><SumIcon />AutoSum <Chevron /></LineTool>
        <LineTool dim><FillIcon />Fill <Chevron /></LineTool>
        <LineTool><EraserIcon />Clear <Chevron /></LineTool>
      </ToolColumn>
      <Large icon={ <SortIcon /> } first="Sort &amp;" second="Filter" arrow dim width={ 32 } />
      <Large icon={ <FindIcon /> } first="Find &amp;" second="Select" arrow width={ 32 } />
    </Group>
    <Group label="Analysis" width={ 42 } center>
      <Large icon={ <AnalyzeIcon /> } first="Analyze" second="Data" dim width={ 40 } />
    </Group>
    <Group label="Sensitivity" width={ 49 } center>
      <Large icon={ <SensitivityIcon /> } first="Sensitivity" arrow dim width={ 46 } />
    </Group>
    <CollapseButton aria-label="Collapse ribbon"><Chevron /></CollapseButton>
  </Ribbon>
);

const Spreadsheet = () => (
  <SheetTable>
    <colgroup>
      <col width="28" />
      {columns.map(([name, width]) => (
        <col key={ name } width={ width || undefined } />
      ))}
    </colgroup>
    <thead>
      <tr>
        <HeadCell column short>
          <svg width="28" height="18">
            <path d="M26 2v15H11z" fill="#e4e4e4" />
          </svg>
        </HeadCell>
        {columns.map(([name, width]) => (
          <HeadCell key={ name } column short scope="col">{width && name}</HeadCell>
        ))}
      </tr>
    </thead>
    <tbody>
      {rows.map(row => (
        <tr key={ row }>
          <HeadCell scope="row" short={ shortRows.includes(row) }>{row}</HeadCell>
          {columns.map(([name]) => {
            const { text, money: isMoney, ...style } = (sheet[row] || {})[name] || {};
            return (
              <Cell key={ name } { ...style }>
                {isMoney ? <Money><span>$</span><span>{text}</span></Money> : text}
              </Cell>
            );
          })}
        </tr>
      ))}
    </tbody>
  </SheetTable>
);

const Notes = () => (
  <TextBox>
    <p>The selling price is $10 per unit.  All sales are on account.</p>
    <p className="lead">2.  Royal's collection pattern is:</p>
    <ul>
      <li>70% collected in the month of sale,</li>
      <li>25% collected in the month following sale,</li>
      <li>5% is uncollectible.</li>
    </ul>
    <p>The March 31 accounts receivable balance <mark>of $30,000 will </mark>be collected in full.</p>
    <p>
      3.  Royal Company wants ending inventory to be equal to 20% of the following month's budgeted<br />
      sales in units.  On March 31, 4,000 units were on hand.
    </p>
    <p>
      4.  At Royal Company, 5kg of material are required per unit of product.  Management wants<br />
      materials on hand at the end of each month equal to 10% of the following month's production.  On<br />
      March 31, 13,000 kg of material are on hand.  Material cost is $0.40 per kg.
    </p>
    <p>
      5.  Royal pays $0.40 per kilo for its materials.  One-half of a month's purchases are paid for in the<br />
      month of purchase; the other half is paid in the following month.  The March 31 accounts payable<br />
      balance is $12,000.
    </p>
    <Handle at="0px" />
    <Handle at="50%" />
    <Handle at="100%" />
    <Rotate>
      <Svg w={ 18 } h={ 32 }>
        <path d="M8.500 17v11" stroke="#999" />
        <path d="M13 8.500a4.700 4.700 0 1 1-1.500-3.700" stroke="#666" strokeWidth="4.500" />
        <path d="M13 8.500a4.700 4.700 0 1 1-1.500-3.700" stroke="#fff" strokeWidth="2" />
        <path d="M9.500 8h8l-4 4z" fill="#fff" stroke="#666" />
      </Svg>
    </Rotate>
  </TextBox>
);

const App = () => (
  <Screen>
    <GlobalStyle />
    <Desktop>
      <TitleBar>
        <TitleSide>
          <ExcelIcon size={ 12 } />
          <AutoSave>
            AutoSave
            <Toggle><input type="checkbox" />Off</Toggle>
          </AutoSave>
          <button aria-label="Save"><SaveIcon /></button>
          <FileName>Comprehensive Problem.xlsx <Chevron /></FileName>
        </TitleSide>
        <SearchBox>
          <Svg size={ 10 }>
            <circle cx="6" cy="4" r="3.300" />
            <path d="M3.600 6.400L.500 9.500" />
          </Svg>
          <input type="text" placeholder="Search" aria-label="Search" />
        </SearchBox>
        <TitleSide end>
          Ann-Marie Cederholm
          <Avatar>AC</Avatar>
          <WindowButton aria-label="Pen"><PenIcon /></WindowButton>
          <WindowButton aria-label="Minimize"><Minus size={ 11 } /></WindowButton>
          <WindowButton aria-label="Restore"><RestoreIcon /></WindowButton>
          <WindowButton aria-label="Close"><X size={ 12 } /></WindowButton>
        </TitleSide>
      </TitleBar>
      <TabBar>
        {tabs.map(tab => (
          <Tab key={ tab } href="#" active={ tab === "Home" } accent={ tab === "Shape Format" }>{tab}</Tab>
        ))}
        <TabActions>
          <ActionButton>
            <Svg size={ 9 }><path d="M.700.700h7.600v5.500H4L2 8.200V6.200H.700z" /></Svg>
            Comments
          </ActionButton>
          <ActionButton green>
            <Svg size={ 9 }><path d="M3 3.500H.700v4.800h6.500V6M2.500 5.500C3 3.500 4 2.800 5.500 2.800V1l3 2.700-3 2.600V4.700c-1.500 0-2 .200-3 .800z" /></Svg>
            Share
            <Chevron />
          </ActionButton>
        </TabActions>
      </TabBar>
      <RibbonBar />
      <FormulaBar>
        <Dropdown label="Name box" value="TextBox 2" width={ 69 } tall />
        <DotsIcon />
        <FormulaButtons>
          <button aria-label="Cancel"><X size={ 11 } /></button>
          <button aria-label="Enter">
            <Svg size={ 11 }><path d="M.500 6l3.500 3.500 6.500-7.500" /></Svg>
          </button>
          <FunctionButton>fx</FunctionButton>
        </FormulaButtons>
        <FormulaInput>
          <input type="text" aria-label="Formula" />
          <Chevron />
        </FormulaInput>
      </FormulaBar>
      <SheetArea>
        <Grid>
          <Spreadsheet />
          <Layer>
            <UpperBox />
            <Notes />
            <Pointer>
              <Svg size={ 72 }>
                <circle cx="36" cy="36" r="33.500" stroke="#eff02f" strokeWidth="4" />
                <path d="M34 29.500h5v4h4v5h-4v4h-5v-4h-4v-5h4z" fill="#fff" stroke="#111" />
              </Svg>
            </Pointer>
          </Layer>
        </Grid>
        <VerticalBar>
          <Triangle d="M3.500 1L6.500 6h-6z" />
          <Thumb vertical />
          <Triangle d="M3.500 6L.5 1h6z" />
        </VerticalBar>
      </SheetArea>
      <SheetTabs>
        <SheetNav>
          <ChevronLeft size={ 11 } />
          <ChevronRight size={ 11 } />
        </SheetNav>
        <SheetTab href="#"><span>Sheet1</span></SheetTab>
        <button aria-label="New sheet"><Plus size={ 11 } /></button>
        <Spacer />
        <DotsIcon />
        <HorizontalBar>
          <Triangle d="M1 3.500L6 .5v6z" />
          <Thumb />
          <Triangle d="M6 3.500L1 .5v6z" />
        </HorizontalBar>
      </SheetTabs>
      <StatusBar>
        <StatusText>Ready</StatusText>
        <StatusText><Accessibility size={ 10 } />Accessibility: Good to go</StatusText>
        <Spacer />
        <ViewButton active aria-label="Normal"><NormalViewIcon /></ViewButton>
        <ViewButton aria-label="Page layout"><PageViewIcon /></ViewButton>
        <ViewButton aria-label="Page break preview"><BreakViewIcon /></ViewButton>
        <button aria-label="Zoom out"><Minus size={ 8 } /></button>
        <ZoomSlider type="range" min="0" max="100" defaultValue="58" aria-label="Zoom" />
        <button aria-label="Zoom in"><Plus size={ 8 } /></button>
        <ZoomLevel>150%</ZoomLevel>
      </StatusBar>
      <Taskbar>
        <Weather>
          <WeatherIcon />
          <div>0°C<br />Partly sunny</div>
        </Weather>
        <Apps>
          <AppButton aria-label="Start"><StartIcon /></AppButton>
          <SearchPill><Search size={ 10 } />Search</SearchPill>
          <AppButton aria-label="Task view"><TaskViewIcon /></AppButton>
          <AppButton aria-label="Chat"><ChatIcon /></AppButton>
          <AppButton aria-label="Files" mark="#999"><FolderIcon /></AppButton>
          <AppButton aria-label="Edge" mark="#999"><EdgeIcon /></AppButton>
          <AppGap />
          <AppButton aria-label="Microsoft 365"><CopilotIcon /></AppButton>
          <AppButton aria-label="Ring"><RingIcon /></AppButton>
          <AppButton aria-label="PowerPoint" mark="#999"><PowerPointIcon /></AppButton>
          <AppButton aria-label="Excel" mark="#6cb0ee" active tint="#2c352f"><ExcelIcon size={ 16 } /></AppButton>
          <AppButton aria-label="Recorder" mark="#f08a8a" tint="#43201f"><RecordIcon /></AppButton>
        </Apps>
        <Tray>
          <ChevronUp size={ 11 } />
          <QuoteIcon />
          <TrayDropboxIcon />
          <Microphone><Mic size={ 11 } /></Microphone>
          <Language>ENG<br />US</Language>
          <Wifi size={ 12 } />
          <Volume2 size={ 11 } />
          <BatteryIcon />
          <Clock>8:34 AM<br />3/07/23</Clock>
          <Count>1</Count>
        </Tray>
      </Taskbar>
      <DropboxBadge>
        <Svg size={ 25 }>
          <circle cx="12.500" cy="12.500" r="12" fill="#0f7fdb" stroke="none" />
          <DropboxShape x={ 5.5 } y={ 6.5 } scale={ 1.15 } fill="#fff" />
        </Svg>
      </DropboxBadge>
    </Desktop>
  </Screen>
);

export default App;
